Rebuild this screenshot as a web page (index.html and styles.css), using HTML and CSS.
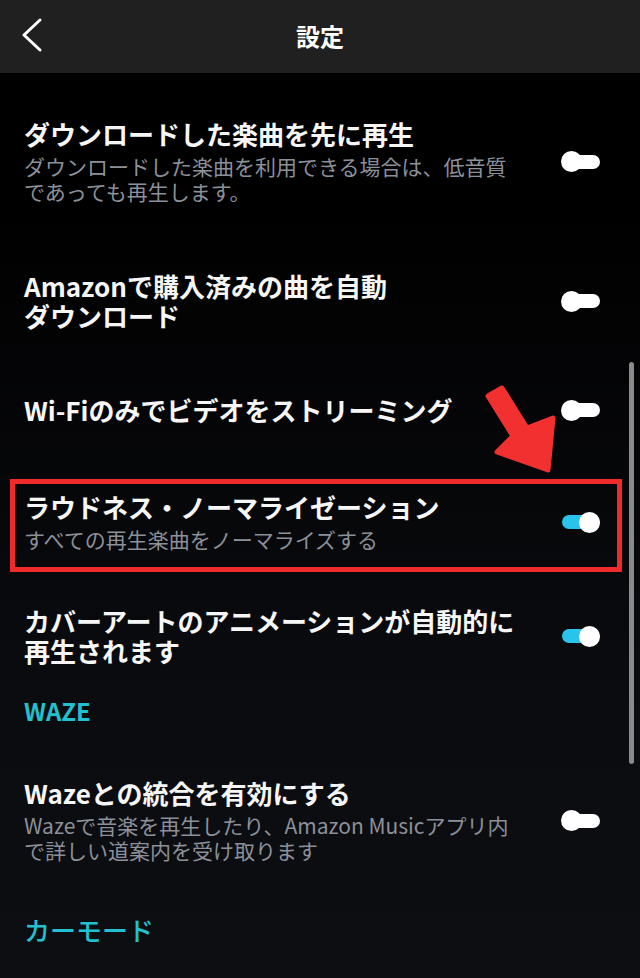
FILE: index.html
```html
<!DOCTYPE html>
<html lang="ja">

<head>
    <meta charset="UTF-8">
    <meta name="viewport" content="width=device-width, initial-scale=1.0">
    <title>設定</title>
    <link rel="stylesheet" href="styles.css">
</head>

<body>
    <div class="screen">
        <header class="topbar">
            <svg class="back" width="24" height="36" viewBox="0 0 24 36">
                <polyline points="19,3 3,18 19,33" fill="none" stroke="#fff" stroke-width="3" stroke-linecap="round" stroke-linejoin="round" />
            </svg>
            <h1>設定</h1>
        </header>

        <main class="list">
            <div class="row row-download">
                <div class="row-text">
                    <div class="row-title">ダウンロードした楽曲を先に再生</div>
                    <div class="row-sub">ダウンロードした楽曲を利用できる場合は、低音質<br>であっても再生します。</div>
                </div>
                <div class="toggle"><span class="knob"></span></div>
            </div>

            <div class="row row-purchased">
                <div class="row-text">
                    <div class="row-title">Amazonで購入済みの曲を自動<br>ダウンロード</div>
                </div>
                <div class="toggle"><span class="knob"></span></div>
            </div>

            <div class="row row-wifi">
                <div class="row-text">
                    <div class="row-title">Wi-Fiのみでビデオをストリーミング</div>
                </div>
                <div class="toggle"><span class="knob"></span></div>
            </div>

            <div class="row row-loudness">
                <div class="row-text">
                    <div class="row-title">ラウドネス・ノーマライゼーション</div>
                    <div class="row-sub">すべての再生楽曲をノーマライズする</div>
                </div>
                <div class="toggle on"><span class="knob"></span></div>
            </div>

            <div class="row row-cover">
                <div class="row-text">
                    <div class="row-title">カバーアートのアニメーションが自動的に<br>再生されます</div>
                </div>
                <div class="toggle on"><span class="knob"></span></div>
            </div>

            <div class="section-label waze">WAZE</div>

            <div class="row row-waze">
                <div class="row-text">
                    <div class="row-title">Wazeとの統合を有効にする</div>
                    <div class="row-sub">Wazeで音楽を再生したり、Amazon Musicアプリ内<br>で詳しい道案内を受け取ります</div>
                </div>
                <div class="toggle"><span class="knob"></span></div>
            </div>

            <div class="section-label car">カーモード</div>
        </main>

        <!-- 注釈: 赤い枠と矢印 -->
        <div class="highlight"></div>
        <svg class="arrow" width="640" height="978" viewBox="0 0 640 978">
            <polygon points="488,396 502,388 527,428 553,418 548,470 497,452 513,436" fill="#f23030" stroke="#f23030" stroke-width="5" stroke-linejoin="round" />
        </svg>

        <div class="scrollbar"></div>
    </div>
</body>

</html>
```

FILE: styles.css
```css
body {
    margin: 0;
    background-color: #000;
    font-family: "Noto Sans CJK JP", "Noto Sans", sans-serif;
    color: #f4f4f4;
}

.screen {
    position: relative;
    width: 640px;
    height: 978px;
    overflow: hidden;
    background: linear-gradient(#000 0px, #000 200px, #0b0c10 700px, #0d0e12 978px);
}

.topbar {
    height: 73px;
    background-color: #202020;
    display: flex;
    align-items: center;
    justify-content: center;
    position: relative;
}

.topbar .back {
    position: absolute;
    left: 21px;
    top: 17px;
}

.topbar h1 {
    margin: 0;
    font-size: 24px;
    font-weight: 700;
    color: #fff;
    line-height: 1;
    padding-bottom: 2px;
}

.list {
    padding-top: 46px;
    display: flex;
    flex-direction: column;
}

.row {
    display: flex;
    align-items: center;
    padding: 0 40px 0 24px;
    margin-bottom: 63px;
}

.row-download {
    margin-bottom: 67px;
}

.row-purchased {
    margin-bottom: 64px;
}

.row-wifi {
    margin-bottom: 67px;
}

.row-loudness {
    margin-bottom: 54px;
}

.row-text {
    flex: 1;
    min-width: 0;
}

.row-title {
    font-size: 26px;
    font-weight: 700;
    line-height: 30px;
    color: #f6f6f6;
    white-space: nowrap;
}

.row-sub {
    margin-top: 5px;
    font-size: 21px;
    line-height: 25px;
    color: #8b9099;
    white-space: nowrap;
}

.toggle {
    flex: none;
    width: 38px;
    height: 14px;
    border-radius: 7px;
    background-color: #fff;
    display: flex;
    align-items: center;
    justify-content: flex-start;
}

.toggle .knob {
    flex: none;
    width: 21px;
    height: 21px;
    border-radius: 50%;
    background-color: #fff;
    margin-left: -1px;
}

.toggle.on {
    background-color: #29c3ec;
    justify-content: flex-end;
}

.toggle.on .knob {
    margin-left: 0;
}

.section-label {
    padding-left: 24px;
    color: #22c1cf;
    line-height: 30px;
}

.waze {
    margin-top: -33px;
    margin-bottom: 52px;
    font-size: 24px;
    font-weight: 700;
}

.car {
    margin-top: -11px;
    font-size: 26px;
    font-weight: 500;
}

.highlight {
    position: absolute;
    left: 10px;
    top: 479px;
    width: 602px;
    height: 83px;
    border: 5px solid #ee2a2a;
}

.arrow {
    position: absolute;
    left: 0;
    top: 0;
    pointer-events: none;
}

.scrollbar {
    position: absolute;
    left: 629px;
    top: 362px;
    width: 5px;
    height: 402px;
    border-radius: 3px;
    background-color: #8a8a8a;
}
```
